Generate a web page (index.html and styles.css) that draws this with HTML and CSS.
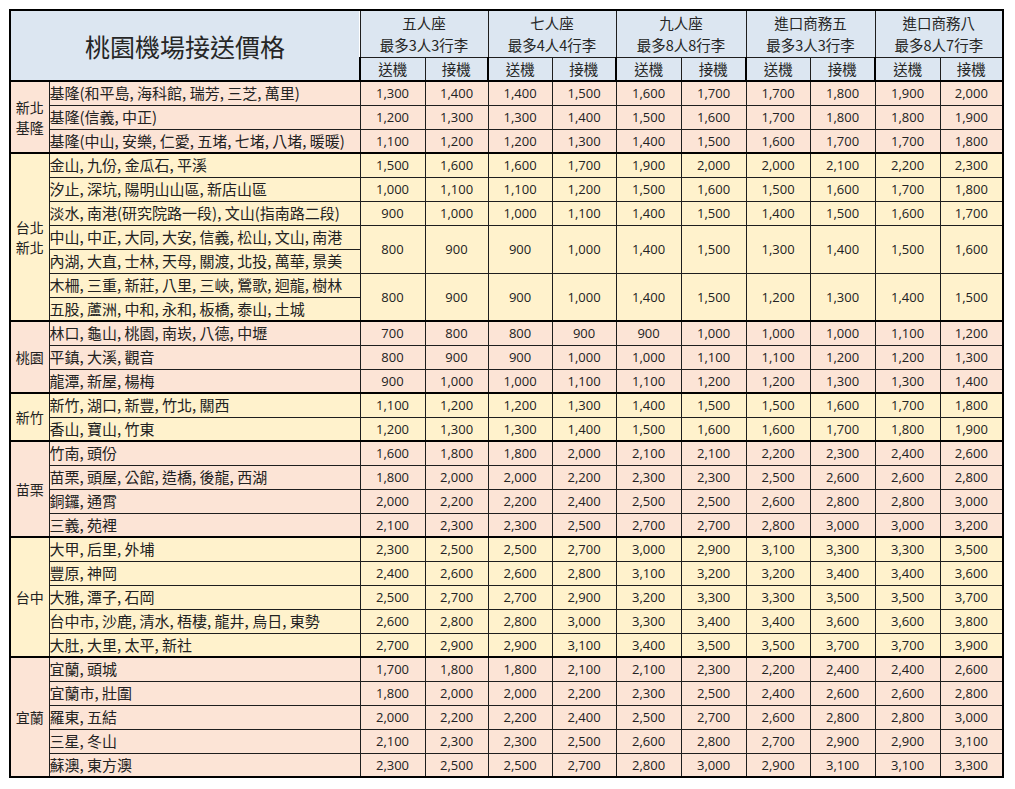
FILE: index.html
```html
<!DOCTYPE html>
<html lang="zh-Hant">
<head>
<meta charset="utf-8">
<title>桃園機場接送價格</title>
<link rel="stylesheet" href="styles.css">
</head>
<body>
<table class="price-table">
  <colgroup>
    <col class="c-region">
    <col class="c-place">
    <col class="c-65"><col class="c-63"><col class="c-64"><col class="c-64"><col class="c-65">
    <col class="c-65"><col class="c-64"><col class="c-65"><col class="c-65"><col class="c-63">
  </colgroup>
  <thead>
    <tr class="h1">
      <th class="title" rowspan="2" colspan="2">桃園機場接送價格</th>
      <th class="veh" colspan="2">五人座<br>最多3人3行李</th>
      <th class="veh" colspan="2">七人座<br>最多4人4行李</th>
      <th class="veh" colspan="2">九人座<br>最多8人8行李</th>
      <th class="veh" colspan="2">進口商務五<br>最多3人3行李</th>
      <th class="veh" colspan="2">進口商務八<br>最多8人7行李</th>
    </tr>
    <tr class="h2">
      <th class="dir first">送機</th><th class="dir">接機</th>
      <th class="dir first">送機</th><th class="dir">接機</th>
      <th class="dir first">送機</th><th class="dir">接機</th>
      <th class="dir first">送機</th><th class="dir">接機</th>
      <th class="dir first">送機</th><th class="dir">接機</th>
    </tr>
  </thead>

  <tbody class="group pink">
    <tr><td class="region" rowspan="3"><span class="rl">新北</span><span class="rl">基隆</span></td><td class="place">基隆(和平島, 海科館, 瑞芳, 三芝, 萬里)</td><td class="n">1,300</td><td class="n">1,400</td><td class="n">1,400</td><td class="n">1,500</td><td class="n">1,600</td><td class="n">1,700</td><td class="n">1,700</td><td class="n">1,800</td><td class="n">1,900</td><td class="n">2,000</td></tr>
    <tr><td class="place">基隆(信義, 中正)</td><td class="n">1,200</td><td class="n">1,300</td><td class="n">1,300</td><td class="n">1,400</td><td class="n">1,500</td><td class="n">1,600</td><td class="n">1,700</td><td class="n">1,800</td><td class="n">1,800</td><td class="n">1,900</td></tr>
    <tr><td class="place">基隆(中山, 安樂, 仁愛, 五堵, 七堵, 八堵, 暖暖)</td><td class="n">1,100</td><td class="n">1,200</td><td class="n">1,200</td><td class="n">1,300</td><td class="n">1,400</td><td class="n">1,500</td><td class="n">1,600</td><td class="n">1,700</td><td class="n">1,700</td><td class="n">1,800</td></tr>
  </tbody>

  <tbody class="group yellow">
    <tr><td class="region" rowspan="7"><span class="rl">台北</span><span class="rl">新北</span></td><td class="place">金山, 九份, 金瓜石, 平溪</td><td class="n">1,500</td><td class="n">1,600</td><td class="n">1,600</td><td class="n">1,700</td><td class="n">1,900</td><td class="n">2,000</td><td class="n">2,000</td><td class="n">2,100</td><td class="n">2,200</td><td class="n">2,300</td></tr>
    <tr><td class="place">汐止, 深坑, 陽明山山區, 新店山區</td><td class="n">1,000</td><td class="n">1,100</td><td class="n">1,100</td><td class="n">1,200</td><td class="n">1,500</td><td class="n">1,600</td><td class="n">1,500</td><td class="n">1,600</td><td class="n">1,700</td><td class="n">1,800</td></tr>
    <tr><td class="place">淡水, 南港(研究院路一段), 文山(指南路二段)</td><td class="n">900</td><td class="n">1,000</td><td class="n">1,000</td><td class="n">1,100</td><td class="n">1,400</td><td class="n">1,500</td><td class="n">1,400</td><td class="n">1,500</td><td class="n">1,600</td><td class="n">1,700</td></tr>
    <tr><td class="place">中山, 中正, 大同, 大安, 信義, 松山, 文山, 南港</td><td class="n" rowspan="2">800</td><td class="n" rowspan="2">900</td><td class="n" rowspan="2">900</td><td class="n" rowspan="2">1,000</td><td class="n" rowspan="2">1,400</td><td class="n" rowspan="2">1,500</td><td class="n" rowspan="2">1,300</td><td class="n" rowspan="2">1,400</td><td class="n" rowspan="2">1,500</td><td class="n" rowspan="2">1,600</td></tr>
    <tr><td class="place">內湖, 大直, 士林, 天母, 關渡, 北投, 萬華, 景美</td></tr>
    <tr><td class="place">木柵, 三重, 新莊, 八里, 三峽, 鶯歌, 迴龍, 樹林</td><td class="n" rowspan="2">800</td><td class="n" rowspan="2">900</td><td class="n" rowspan="2">900</td><td class="n" rowspan="2">1,000</td><td class="n" rowspan="2">1,400</td><td class="n" rowspan="2">1,500</td><td class="n" rowspan="2">1,200</td><td class="n" rowspan="2">1,300</td><td class="n" rowspan="2">1,400</td><td class="n" rowspan="2">1,500</td></tr>
    <tr><td class="place">五股, 蘆洲, 中和, 永和, 板橋, 泰山, 土城</td></tr>
  </tbody>

  <tbody class="group pink">
    <tr><td class="region" rowspan="3">桃園</td><td class="place">林口, 龜山, 桃園, 南崁, 八德, 中壢</td><td class="n">700</td><td class="n">800</td><td class="n">800</td><td class="n">900</td><td class="n">900</td><td class="n">1,000</td><td class="n">1,000</td><td class="n">1,000</td><td class="n">1,100</td><td class="n">1,200</td></tr>
    <tr><td class="place">平鎮, 大溪, 觀音</td><td class="n">800</td><td class="n">900</td><td class="n">900</td><td class="n">1,000</td><td class="n">1,000</td><td class="n">1,100</td><td class="n">1,100</td><td class="n">1,200</td><td class="n">1,200</td><td class="n">1,300</td></tr>
    <tr><td class="place">龍潭, 新屋, 楊梅</td><td class="n">900</td><td class="n">1,000</td><td class="n">1,000</td><td class="n">1,100</td><td class="n">1,100</td><td class="n">1,200</td><td class="n">1,200</td><td class="n">1,300</td><td class="n">1,300</td><td class="n">1,400</td></tr>
  </tbody>

  <tbody class="group yellow">
    <tr><td class="region" rowspan="2">新竹</td><td class="place">新竹, 湖口, 新豐, 竹北, 關西</td><td class="n">1,100</td><td class="n">1,200</td><td class="n">1,200</td><td class="n">1,300</td><td class="n">1,400</td><td class="n">1,500</td><td class="n">1,500</td><td class="n">1,600</td><td class="n">1,700</td><td class="n">1,800</td></tr>
    <tr><td class="place">香山, 寶山, 竹東</td><td class="n">1,200</td><td class="n">1,300</td><td class="n">1,300</td><td class="n">1,400</td><td class="n">1,500</td><td class="n">1,600</td><td class="n">1,600</td><td class="n">1,700</td><td class="n">1,800</td><td class="n">1,900</td></tr>
  </tbody>

  <tbody class="group pink">
    <tr><td class="region" rowspan="4">苗栗</td><td class="place">竹南, 頭份</td><td class="n">1,600</td><td class="n">1,800</td><td class="n">1,800</td><td class="n">2,000</td><td class="n">2,100</td><td class="n">2,100</td><td class="n">2,200</td><td class="n">2,300</td><td class="n">2,400</td><td class="n">2,600</td></tr>
    <tr><td class="place">苗栗, 頭屋, 公館, 造橋, 後龍, 西湖</td><td class="n">1,800</td><td class="n">2,000</td><td class="n">2,000</td><td class="n">2,200</td><td class="n">2,300</td><td class="n">2,300</td><td class="n">2,500</td><td class="n">2,600</td><td class="n">2,600</td><td class="n">2,800</td></tr>
    <tr><td class="place">銅鑼, 通霄</td><td class="n">2,000</td><td class="n">2,200</td><td class="n">2,200</td><td class="n">2,400</td><td class="n">2,500</td><td class="n">2,500</td><td class="n">2,600</td><td class="n">2,800</td><td class="n">2,800</td><td class="n">3,000</td></tr>
    <tr><td class="place">三義, 苑裡</td><td class="n">2,100</td><td class="n">2,300</td><td class="n">2,300</td><td class="n">2,500</td><td class="n">2,700</td><td class="n">2,700</td><td class="n">2,800</td><td class="n">3,000</td><td class="n">3,000</td><td class="n">3,200</td></tr>
  </tbody>

  <tbody class="group yellow">
    <tr><td class="region" rowspan="5">台中</td><td class="place">大甲, 后里, 外埔</td><td class="n">2,300</td><td class="n">2,500</td><td class="n">2,500</td><td class="n">2,700</td><td class="n">3,000</td><td class="n">2,900</td><td class="n">3,100</td><td class="n">3,300</td><td class="n">3,300</td><td class="n">3,500</td></tr>
    <tr><td class="place">豐原, 神岡</td><td class="n">2,400</td><td class="n">2,600</td><td class="n">2,600</td><td class="n">2,800</td><td class="n">3,100</td><td class="n">3,200</td><td class="n">3,200</td><td class="n">3,400</td><td class="n">3,400</td><td class="n">3,600</td></tr>
    <tr><td class="place">大雅, 潭子, 石岡</td><td class="n">2,500</td><td class="n">2,700</td><td class="n">2,700</td><td class="n">2,900</td><td class="n">3,200</td><td class="n">3,300</td><td class="n">3,300</td><td class="n">3,500</td><td class="n">3,500</td><td class="n">3,700</td></tr>
    <tr><td class="place">台中市, 沙鹿, 清水, 梧棲, 龍井, 烏日, 東勢</td><td class="n">2,600</td><td class="n">2,800</td><td class="n">2,800</td><td class="n">3,000</td><td class="n">3,300</td><td class="n">3,400</td><td class="n">3,400</td><td class="n">3,600</td><td class="n">3,600</td><td class="n">3,800</td></tr>
    <tr><td class="place">大肚, 大里, 太平, 新社</td><td class="n">2,700</td><td class="n">2,900</td><td class="n">2,900</td><td class="n">3,100</td><td class="n">3,400</td><td class="n">3,500</td><td class="n">3,500</td><td class="n">3,700</td><td class="n">3,700</td><td class="n">3,900</td></tr>
  </tbody>

  <tbody class="group pink">
    <tr><td class="region" rowspan="5">宜蘭</td><td class="place">宜蘭, 頭城</td><td class="n">1,700</td><td class="n">1,800</td><td class="n">1,800</td><td class="n">2,100</td><td class="n">2,100</td><td class="n">2,300</td><td class="n">2,200</td><td class="n">2,400</td><td class="n">2,400</td><td class="n">2,600</td></tr>
    <tr><td class="place">宜蘭市, 壯圍</td><td class="n">1,800</td><td class="n">2,000</td><td class="n">2,000</td><td class="n">2,200</td><td class="n">2,300</td><td class="n">2,500</td><td class="n">2,400</td><td class="n">2,600</td><td class="n">2,600</td><td class="n">2,800</td></tr>
    <tr><td class="place">羅東, 五結</td><td class="n">2,000</td><td class="n">2,200</td><td class="n">2,200</td><td class="n">2,400</td><td class="n">2,500</td><td class="n">2,700</td><td class="n">2,600</td><td class="n">2,800</td><td class="n">2,800</td><td class="n">3,000</td></tr>
    <tr><td class="place">三星, 冬山</td><td class="n">2,100</td><td class="n">2,300</td><td class="n">2,300</td><td class="n">2,500</td><td class="n">2,600</td><td class="n">2,800</td><td class="n">2,700</td><td class="n">2,900</td><td class="n">2,900</td><td class="n">3,100</td></tr>
    <tr><td class="place">蘇澳, 東方澳</td><td class="n">2,300</td><td class="n">2,500</td><td class="n">2,500</td><td class="n">2,700</td><td class="n">2,800</td><td class="n">3,000</td><td class="n">2,900</td><td class="n">3,100</td><td class="n">3,100</td><td class="n">3,300</td></tr>
  </tbody>
</table>
</body>
</html>
```

FILE: styles.css
```css
html, body {
  margin: 0;
  background: #ffffff;
}

body {
  padding: 9px 0 0 9px;
  font-family: "Noto Sans CJK TC", "Noto Sans CJK SC", sans-serif;
  color: #222222;
}

.price-table {
  border-collapse: collapse;
  table-layout: fixed;
  width: 995px;
  border: 2px solid #000000;
}

.c-region { width: 39px; }
.c-place { width: 311px; }
.c-63 { width: 63px; }
.c-64 { width: 64px; }
.c-65 { width: 65px; }

.price-table th,
.price-table td {
  border: 1px solid #1e1e1e;
  padding: 0;
  font-weight: normal;
  overflow: hidden;
  white-space: nowrap;
}

/* header */
.price-table thead th {
  background: #dce6f1;
  text-align: center;
  color: #262626;
}

.h1 { height: 47px; }
.h2 { height: 24px; }

.title {
  font-size: 25px;
  line-height: 30px;
  border-right: 2px solid #000000;
  border-bottom: 2px solid #000000;
}

.veh {
  font-size: 14.5px;
  line-height: 22px;
  padding-top: 1px;
  border-left: 2px solid #000000;
}

.dir {
  font-size: 14.5px;
  line-height: 20px;
  border-bottom: 2px solid #000000;
}

.dir.first { border-left: 2px solid #000000; }

/* body */
.group { border-top: 2px solid #000000; }
.group tr { height: 24px; }

.pink td { background: #fce4d6; }
.yellow td { background: #fff2cc; }

.region {
  text-align: center;
  font-size: 14px;
  line-height: 20.5px;
}

.rl {
  display: block;
  line-height: 20.5px;
}

.place {
  font-size: 15px;
  line-height: 20px;
  padding-left: 2px;
  border-right: 2px solid #000000;
}

.n {
  text-align: center;
  font-family: "Open Sans", "Liberation Sans", sans-serif;
  font-size: 13px;
  line-height: 20px;
}
```
